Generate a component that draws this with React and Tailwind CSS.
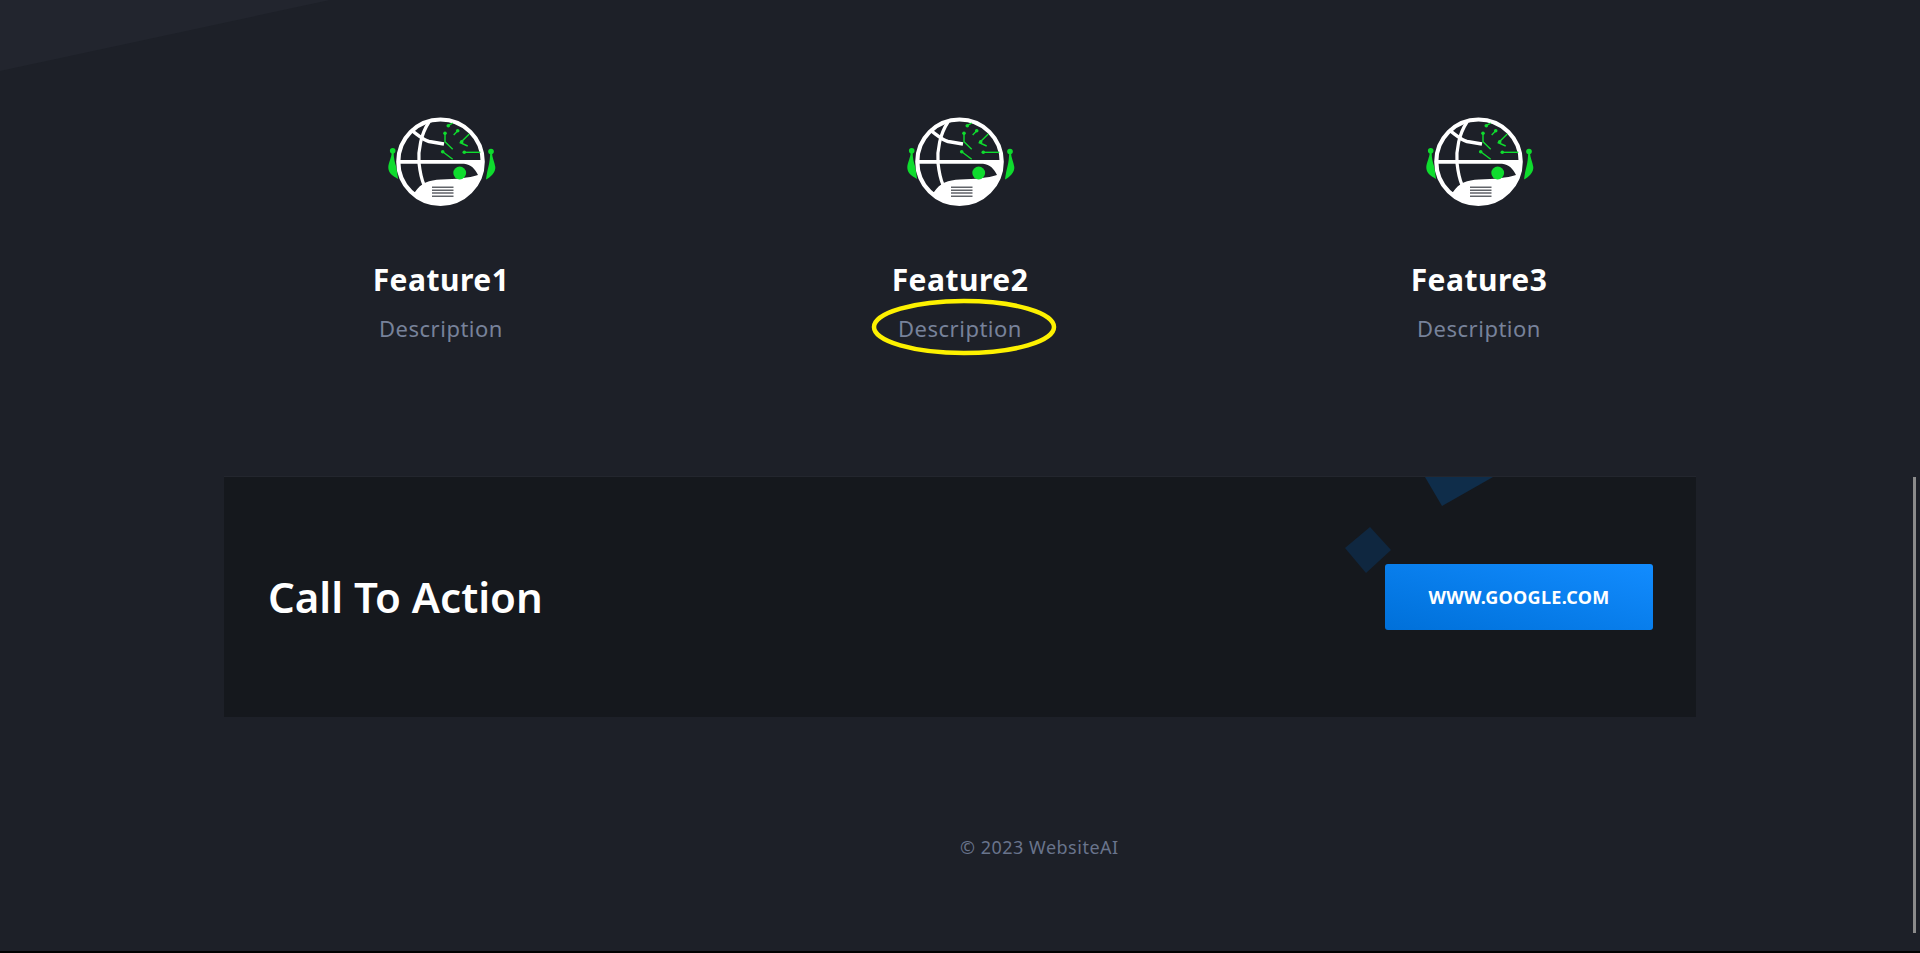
const features = ['Feature1', 'Feature2', 'Feature3'];

const RobotGlobe = ({ id }) => (
  <svg width="160" height="120" viewBox="0 0 160 120" className="block">
    <defs>
      <clipPath id={id}>
        <circle cx="79.5" cy="61.7" r="42.5" />
      </clipPath>
    </defs>
    {/* side antennas */}
    <g fill="#0fdc2e">
      <circle cx="31.7" cy="50.7" r="2.8" />
      <path d="M30.8 52 L32.6 52 C32.8 58 33.6 62 35 66 C36 70 36.5 75 37 79 C32 76 27 73 27.3 67 C27.6 62 30.5 58 30.8 52 Z" />
      <circle cx="130" cy="51.5" r="2.8" />
      <path d="M129.2 53 L131 53 C131.2 58 133.6 62 134.3 67 C134.8 72 130 77 125 79.5 C125.6 75 126.5 70 127.6 66 C128.6 62 129 58 129.2 53 Z" />
    </g>
    {/* lower half of the globe, with the dark eye cut out of it */}
    <g clipPath={`url(#${id})`}>
      <rect x="30" y="60" width="100" height="50" fill="#fff" />
      <path d="M30 63.8 L103 63.8 C110 64.5 114 69 117 75 C108 78 95 79 80 79.5 C68 80 60 83 54 92 L30 92 Z" fill="#1d2028" />
    </g>
    <circle cx="79.5" cy="61.7" r="42.2" fill="none" stroke="#fff" strokeWidth="4.2" />
    {/* meridian and upper arc */}
    <path d="M68 22 C60 34 57 50 58 63 C59 72 60 78 63 85" fill="none" stroke="#fff" strokeWidth="3.2" />
    <path d="M50 30 C56 34 62 40 68 41.5 C73 42.5 78 43 83 44" fill="none" stroke="#fff" strokeWidth="3.4" />
    {/* vents */}
    <g fill="#3a3d44">
      <rect x="71" y="86.6" width="21.5" height="1.2" />
      <rect x="71" y="89.6" width="21.5" height="1.2" />
      <rect x="71" y="92.4" width="21.5" height="1.2" />
      <rect x="71" y="95.6" width="21.5" height="1.2" />
    </g>
    {/* eye */}
    <circle cx="98.7" cy="73" r="6.4" fill="#0fdc2e" />
    {/* circuit traces */}
    <g fill="none" stroke="#0fdc2e" strokeWidth="1.4">
      <path d="M87.3 25.7 L91.7 23" />
      <path d="M96.7 30.7 L92.7 35" />
      <path d="M84 33.3 L84 41.7 L91.7 49.3" />
      <path d="M108.3 34 L99.3 42.7 L106.7 46" />
      <path d="M81.7 51.7 L91.7 59.3" />
      <path d="M103.3 52.3 L119.3 52.3" />
    </g>
    <g fill="#0fdc2e">
      <circle cx="87.3" cy="25.7" r="1.8" />
      <circle cx="96.7" cy="30.7" r="1.8" />
      <circle cx="84" cy="33.3" r="1.8" />
      <circle cx="100.7" cy="41.7" r="1.8" />
      <circle cx="81.7" cy="51.7" r="1.8" />
      <circle cx="103.3" cy="52.3" r="1.8" />
    </g>
  </svg>
);

const App = () => {
  return (
    <div className="bg-black h-[953px] overflow-hidden">
      <div className="relative h-[951px] bg-[#1d2028] font-['Noto_Sans',sans-serif] overflow-hidden">
        {/* faint diagonal at the top left */}
        <svg width="340" height="72" className="absolute top-0 left-0">
          <polygon points="0,0 330,0 0,71" fill="#22252e" />
        </svg>

        <div className="relative pt-[100px] w-[1557px] mx-auto grid grid-cols-3">
          {features.map((name, i) => (
            <div key={name} className="relative flex flex-col items-center">
              <RobotGlobe id={`globe-${i}`} />
              <h3 className="mt-[41px] text-[30px] leading-[38px] tracking-[0.5px] font-bold text-white">{name}</h3>
              <p className="mt-[15px] text-[22px] leading-[28px] tracking-[0.5px] text-[#77829a]">Description</p>
              {i === 1 && (
                <svg width="190" height="60" className="absolute left-[168px] top-[197px]">
                  <ellipse cx="95" cy="30" rx="90" ry="26" fill="none" stroke="#fdf100" strokeWidth="4.5" />
                </svg>
              )}
            </div>
          ))}
        </div>

        <div className="relative mt-[134px] mx-auto w-[1472px] h-[241px] bg-[#15181d] border-t border-[#23262e] flex items-center justify-between pl-11 pr-[43px]">
          {/* background shapes */}
          <svg width="160" height="100" className="absolute left-[1121px] top-0">
            <polygon points="80,0 148,0 97,29" fill="#0f2d4a" />
            <polygon points="25,50 46,73 21,96 0,71" fill="#0f2740" />
          </svg>
          <h2 className="relative text-[42px] leading-[56px] font-semibold text-white">Call To Action</h2>
          <a className="relative w-[268px] h-[66px] rounded-[3px] bg-gradient-to-tr from-[#0070d9] to-[#128cff] flex items-center justify-center text-[18px] tracking-[0.3px] font-bold text-white">
            WWW.GOOGLE.COM
          </a>
        </div>

        <p className="mt-[118px] ml-[960px] text-[18px] leading-6 tracking-[0.5px] text-[#69748c]">© 2023 WebsiteAI</p>

        {/* scrollbar thumb */}
        <div className="absolute left-[1913px] top-[477px] w-[3px] h-[456px] bg-[#8b8b8b]" />
      </div>
    </div>
  );
};

export default App;
